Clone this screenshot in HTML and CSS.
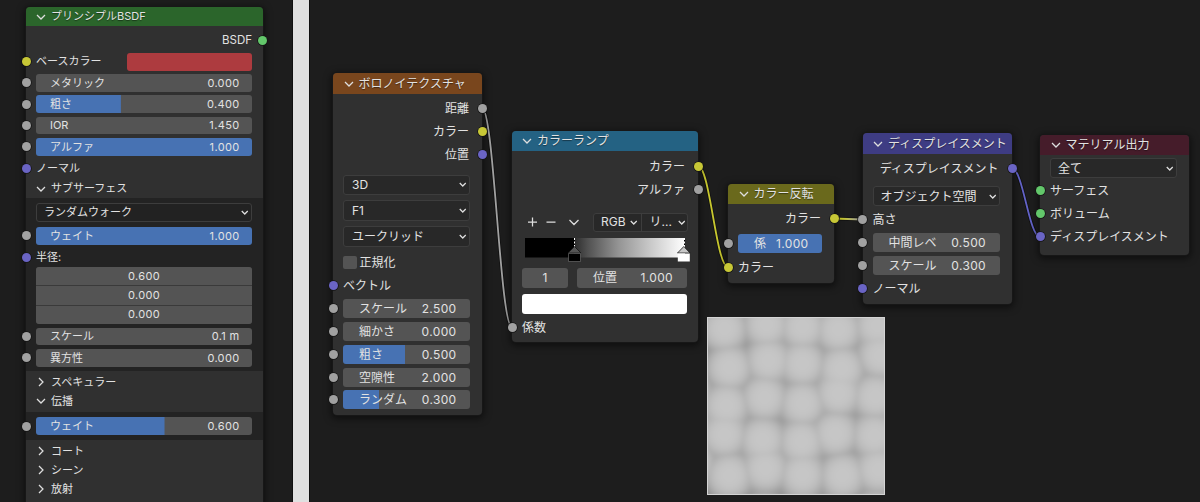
FILE: index.html
```html
<!DOCTYPE html>
<html lang="ja">
<head>
<meta charset="utf-8">
<title>シェーダーノード</title>
<link rel="stylesheet" href="styles.css">
</head>
<body>
<svg class="symbols" width="0" height="0">
  <symbol id="down" viewBox="0 0 10 6"><path d="M1 1l4 4 4-4"/></symbol>
  <symbol id="right" viewBox="0 0 6 10"><path d="M1 1l4 4-4 4"/></symbol>
</svg>
<main class="editor">
  <div class="pane pane-left"></div>
  <div class="divider"></div>
  <div class="pane pane-right"></div>

  <svg class="links" width="1200" height="502" viewBox="0 0 1200 502">
    <defs>
      <linearGradient id="mix" gradientUnits="userSpaceOnUse" x1="838" x2="860" y1="0" y2="0"><stop offset=".2" stop-color="#c7c72f"/><stop offset="1" stop-color="#a1a1a1"/></linearGradient>
    </defs>
    <g class="shade">
      <path d="M482 108C494 108 500 327 512 327"/><path d="M698 166C710 166 716 267 728 267"/><path d="M834 218.500L862 219.500"/><path d="M1012 168.500C1023 168.500 1029 237 1040 237"/>
    </g>
    <path class="gray" d="M482 108C494 108 500 327 512 327"/>
    <path class="yellow" d="M698 166C710 166 716 267 728 267"/>
    <path class="mixed" d="M834 218.500L862 219.500"/>
    <path class="violet" d="M1012 168.500C1023 168.500 1029 237 1040 237"/>
  </svg>

  <section class="node principled">
    <header><svg class="down"><use href="#down"/></svg>プリンシプルBSDF</header>
    <div class="row out"><span>BSDF</span><i class="socket green"></i></div>
    <div class="row"><i class="socket yellow"></i><span>ベースカラー</span><b class="swatch"></b></div>
    <div class="row"><i class="socket"></i><div class="field"><span>メタリック</span><span>0.000</span></div></div>
    <div class="row"><i class="socket"></i><div class="field part" style="--fill:39.3%"><span>粗さ</span><span>0.400</span></div></div>
    <div class="row"><i class="socket"></i><div class="field"><span>IOR</span><span>1.450</span></div></div>
    <div class="row"><i class="socket"></i><div class="field part" style="--fill:100%"><span>アルファ</span><span>1.000</span></div></div>
    <div class="row"><i class="socket violet"></i><span>ノーマル</span></div>
    <div class="panel-title"><svg class="down"><use href="#down"/></svg>サブサーフェス</div>
    <div class="panel subsurface">
      <div class="row"><div class="select"><span>ランダムウォーク</span><svg class="down small"><use href="#down"/></svg></div></div>
      <div class="row weight"><i class="socket"></i><div class="field part" style="--fill:100%"><span>ウェイト</span><span>1.000</span></div></div>
      <div class="row"><i class="socket violet"></i><span>半径:</span></div>
      <div class="vector"><span>0.600</span><span>0.000</span><span>0.000</span></div>
      <div class="row"><i class="socket"></i><div class="field"><span>スケール</span><span>0.1 m</span></div></div>
      <div class="row"><i class="socket"></i><div class="field"><span>異方性</span><span>0.000</span></div></div>
    </div>
    <div class="panel-title first"><svg class="right"><use href="#right"/></svg>スペキュラー</div>
    <div class="panel-title"><svg class="down"><use href="#down"/></svg>伝播</div>
    <div class="panel transmission">
      <div class="row"><i class="socket"></i><div class="field part" style="--fill:59.5%"><span>ウェイト</span><span>0.600</span></div></div>
    </div>
    <div class="panel-title second"><svg class="right"><use href="#right"/></svg>コート</div>
    <div class="panel-title"><svg class="right"><use href="#right"/></svg>シーン</div>
    <div class="panel-title"><svg class="right"><use href="#right"/></svg>放射</div>
  </section>

  <section class="node voronoi">
    <header><svg class="down"><use href="#down"/></svg>ボロノイテクスチャ</header>
    <div class="row out"><span>距離</span><i class="socket"></i></div>
    <div class="row out"><span>カラー</span><i class="socket yellow"></i></div>
    <div class="row out"><span>位置</span><i class="socket violet"></i></div>
    <div class="options">
      <div class="select"><span>3D</span><svg class="down small"><use href="#down"/></svg></div>
      <div class="select"><span>F1</span><svg class="down small"><use href="#down"/></svg></div>
      <div class="select"><span>ユークリッド</span><svg class="down small"><use href="#down"/></svg></div>
    </div>
    <div class="row check"><b class="box"></b><span>正規化</span></div>
    <div class="row"><i class="socket violet"></i><span>ベクトル</span></div>
    <div class="row"><i class="socket"></i><div class="field"><span>スケール</span><span>2.500</span></div></div>
    <div class="row"><i class="socket"></i><div class="field"><span>細かさ</span><span>0.000</span></div></div>
    <div class="row"><i class="socket"></i><div class="field part" style="--fill:49%"><span>粗さ</span><span>0.500</span></div></div>
    <div class="row"><i class="socket"></i><div class="field"><span>空隙性</span><span>2.000</span></div></div>
    <div class="row last"><i class="socket"></i><div class="field part" style="--fill:28.5%"><span>ランダム</span><span>0.300</span></div></div>
  </section>

  <section class="node ramp">
    <header><svg class="down"><use href="#down"/></svg>カラーランプ</header>
    <div class="row out"><span>カラー</span><i class="socket yellow"></i></div>
    <div class="row out"><span>アルファ</span><i class="socket"></i></div>
    <div class="tools">
      <svg class="plusminus" width="50" height="12" viewBox="0 0 50 12"><path d="M1 6h9M5.500 1.500v9M19.500 6h9M42.500 4l4.500 4.500L51.500 4"/></svg>
      <div class="modes">
        <div class="mode"><span>RGB</span><svg class="down small"><use href="#down"/></svg></div>
        <div class="mode"><span>リ...</span><svg class="down small"><use href="#down"/></svg></div>
      </div>
    </div>
    <svg class="gradient" width="170" height="26" viewBox="0 0 170 26">
      <defs><linearGradient id="g"><stop offset="0" stop-color="#2c2c2c"/><stop offset=".12" stop-color="#505050"/><stop offset=".4" stop-color="#949494"/><stop offset=".7" stop-color="#cbcbcb"/><stop offset="1" stop-color="#fff"/></linearGradient></defs>
      <rect x="3" y="1" width="49.500" height="19.500" fill="#000"/>
      <rect x="52" y="1" width="111" height="19.500" fill="url(#g)"/>
      <path d="M52.500 1v9M162.500 1v9" fill="none" stroke="#000" stroke-width="1"/>
      <path d="M52.500 1v9M162.500 1v9" fill="none" stroke="#fff" stroke-width="1" stroke-dasharray="2 1.500"/>
      <path d="M46 16l6.500-6.500 6.500 6.500z" fill="#555" stroke="#161616" stroke-width=".8"/>
      <path d="M46.500 16.500h12v8h-12z" fill="#000" stroke="#777" stroke-width=".6"/>
      <path d="M155.500 16l6.300-6.500 6.300 6.500z" fill="#c8c8c8" stroke="#161616" stroke-width=".8"/>
      <path d="M155.800 16.500h12v8h-12z" fill="#fff"/>
    </svg>
    <div class="stop"><div class="field index">1</div><div class="field pos"><span>位置</span><span>1.000</span></div></div>
    <div class="stop-color"></div>
    <div class="row"><i class="socket"></i><span>係数</span></div>
  </section>

  <section class="node invert">
    <header><svg class="down"><use href="#down"/></svg>カラー反転</header>
    <div class="row out"><span>カラー</span><i class="socket yellow"></i></div>
    <div class="row fac"><i class="socket"></i><div class="field part" style="--fill:100%"><span>係</span><span>1.000</span></div></div>
    <div class="row"><i class="socket yellow"></i><span>カラー</span></div>
  </section>

  <section class="node displace">
    <header><svg class="down"><use href="#down"/></svg>ディスプレイスメント</header>
    <div class="row out"><span>ディスプレイスメント</span><i class="socket violet"></i></div>
    <div class="options"><div class="select"><span>オブジェクト空間</span><svg class="down small"><use href="#down"/></svg></div></div>
    <div class="row"><i class="socket"></i><span>高さ</span></div>
    <div class="row"><i class="socket"></i><div class="field"><span>中間レベ</span><span>0.500</span></div></div>
    <div class="row"><i class="socket"></i><div class="field"><span>スケール</span><span>0.300</span></div></div>
    <div class="row"><i class="socket violet"></i><span>ノーマル</span></div>
  </section>

  <section class="node output">
    <header><svg class="down"><use href="#down"/></svg>マテリアル出力</header>
    <div class="options"><div class="select"><span>全て</span><svg class="down small"><use href="#down"/></svg></div></div>
    <div class="row"><i class="socket green"></i><span>サーフェス</span></div>
    <div class="row"><i class="socket green"></i><span>ボリューム</span></div>
    <div class="row"><i class="socket violet"></i><span>ディスプレイスメント</span></div>
  </section>

  <canvas class="preview" width="178" height="178"></canvas>
</main>
<script src="texture.js"></script>
</body>
</html>
```
FILE: styles.css
```css
* { box-sizing: border-box; }
body { margin: 0; background: #1d1d1d; overflow: hidden; }
.symbols { position: absolute; }
.editor {
  position: relative; display: flex; width: 1200px; height: 502px; overflow: hidden;
  font-family: Inter, "Noto Sans CJK JP", sans-serif; font-size: 12px; color: #e2e2e2;
  line-height: 1; white-space: nowrap;
}
.pane { background: #1d1d1d; }
.pane-left { width: 293px; border-right: 1px solid #111; }
.divider { width: 16px; background: #e0e0e0; }
.pane-right { flex: 1; border-left: 1px solid #101010; }

/* Links between sockets */
.links { position: absolute; left: 0; top: 0; fill: none; stroke-width: 1.8; }
.links .shade { stroke: #111; stroke-width: 3.4; }
.links .gray { stroke: #a1a1a1; }
.links .yellow { stroke: #c7c72f; }
.links .violet { stroke: #6363c7; }
.links .mixed { stroke: url(#mix); }

/* Nodes */
.node {
  --row: 23px;
  position: absolute; background: #303030; border-radius: 4px;
  box-shadow: 0 0 0 1px #171717, 0 2px 7px 2px rgba(0, 0, 0, .5);
}
.node header {
  display: flex; align-items: center; gap: 5px; height: 20.5px; padding: 1px 0 0 10.5px;
  margin-bottom: 3.5px; border-radius: 4px 4px 0 0; text-shadow: 0 1px 1px rgba(0, 0, 0, .45);
}
svg.down { width: 10px; height: 6px; flex: none; }
svg.right { width: 6px; height: 10px; flex: none; margin: 0 2px; }
svg.small { width: 7.5px; height: 5px; stroke-width: 1.7; }
.down, .right { fill: none; stroke: #dedede; stroke-width: 1.25; }
.row { position: relative; display: flex; align-items: center; height: var(--row); padding: 0 12px 0 10px; }
.row > span, .field > span, .select > span { padding-top: 1px; }
.row.out { justify-content: flex-end; padding-right: 13px; }
.socket {
  position: absolute; left: -4.5px; top: calc(50% - 4.5px); width: 9px; height: 9px;
  border-radius: 50%; background: #a1a1a1; box-shadow: 0 0 0 .7px #141414;
}
.out .socket { left: auto; right: -5px; }
.socket.yellow { background: #c7c736; }
.socket.green { background: #63c76b; }
.socket.violet { background: #6a64c4; }
.field {
  display: flex; align-items: center; justify-content: space-between; flex: 1;
  height: 19px; padding: 0 13.5px 0 16px; border-radius: 3px; background: #545454;
}
.field span:last-child, .vector { letter-spacing: .35px; }
.part { background: linear-gradient(#4772b3, #4772b3) 0 0 / var(--fill) 100% no-repeat #545454; }
.options { display: flex; flex-direction: column; padding: 0 12px 0 10px; }
.select {
  display: flex; align-items: center; justify-content: space-between; flex: 1;
  padding: 0 2.5px 0 8px; border: 1px solid #3d3d3d; border-radius: 3px; background: #282828;
}

.principled { --row: 21.35px; left: 26px; top: 7px; width: 236.5px; height: 510px; font-size: 11px; }
.principled header { height: 19px; background: #2b652b; padding: 0 0 0 10px; }
.principled .row { padding: 0 10.5px 0 10px; }
.principled .row > span, .principled .field > span, .principled .select > span { padding-top: .5px; }
.principled .out { font-size: 11.5px; }
.principled .out .socket { right: -4.5px; }
.principled .field { height: 17.5px; padding: 0 12.5px 0 14px; }
.swatch { width: 125.5px; height: 18px; margin-left: auto; border-radius: 3px; background: #ad3b3f; }
.panel-title { display: flex; align-items: center; gap: 5px; height: 19.2px; padding-left: 10px; }
.panel-title.first { margin-top: 2px; }
.panel-title.second { margin-top: 1.5px; }
.panel { background: #232323; }
.subsurface { height: 172.5px; padding-top: 3.5px; }
.subsurface .select { height: 18.5px; padding-left: 7px; background: #222; }
.weight { margin-top: 2.3px; }
.vector {
  display: grid; grid-template-rows: repeat(3, 1fr); gap: 1px; height: 57px; margin: -.8px 10.5px 1.8px 10px;
  overflow: hidden; border-radius: 3px; background: #3a3a3a;
}
.vector span { display: flex; align-items: center; justify-content: center; background: #545454; }
.transmission { height: 28px; margin-top: 1px; padding-top: 3.4px; }

.voronoi { left: 333px; top: 73px; width: 149px; height: 341.5px; }
.voronoi header { background: #79461d; }
.voronoi .options { gap: 5px; margin-top: 8.5px; }
.voronoi .select { flex: none; height: 20.7px; }
.check { gap: 3px; margin-top: 4.4px; }
.voronoi .last { margin-top: -.8px; }
.box { width: 13.5px; height: 13.5px; border-radius: 2px; background: #545454; }

.ramp { left: 512px; top: 130.5px; width: 186px; height: 211.5px; }
.ramp header { background: #246283; padding-left: 10px; }
.tools { display: flex; align-items: center; height: 19px; margin: 12.3px 11px 0 15px; }
.plusminus { overflow: visible; fill: none; stroke: #dedede; stroke-width: 1.25; }
.modes { display: flex; flex: 1; height: 19px; margin-left: 16px; border: 1px solid #3d3d3d; border-radius: 3px; background: #282828; }
.mode { display: flex; align-items: center; justify-content: space-between; width: 46.5px; padding: 0 3px 0 7px; }
.mode + .mode { flex: 1; padding: 0 2px 0 8px; border-left: 1px solid #3d3d3d; }
.gradient { display: block; margin: 5.2px 0 0 10px; }
.stop { display: flex; gap: 9px; height: 20px; margin: 5px 11.5px 0 10px; }
.stop .field { height: 20px; }
.stop .index { flex: none; width: 46px; justify-content: center; padding: 0; }
.stop-color { height: 20px; margin: 6px 11.5px 2px 10px; border-radius: 3px; background: #fff; }

.invert { left: 728px; top: 183.5px; width: 106px; height: 99px; }
.invert header { background: #6a691c; }
.invert .out { margin-top: -.5px; }
.fac { margin: 1.5px 0; }

.displace { left: 862.5px; top: 133px; width: 149px; height: 171px; }
.displace header { background: #3e3c83; }
.displace .options { margin: 6px 0 2px; }
.displace .select, .output .select { flex: none; height: 20px; padding-left: 7px; }

.output { left: 1040px; top: 134.5px; width: 149px; height: 120px; }
.output header { background: #451c2a; }
.output .options { padding-right: 12px; margin: -.5px 0 .8px; }

.preview { position: absolute; left: 707px; top: 317px; width: 178px; height: 178px; }
```
FILE: texture.js
```js
// Smooth Voronoi cells: flat light centres falling off toward the borders.
const canvas = document.querySelector('.preview');
const ctx = canvas.getContext('2d');
const image = ctx.createImageData(178, 178);
const centres = [
  [17, 11], [59, 7], [95, 9], [131, 12], [170, 8],
  [22, 50], [61, 43], [95, 46], [134, 51], [173, 38],
  [19, 88], [57, 80], [95, 86], [131, 76], [168, 79],
  [17, 117], [55, 122], [94, 124], [128, 116], [167, 118],
  [22, 158], [58, 151], [95, 157], [135, 158], [171, 152], [-16, 145],
  [20, 199], [57, 199], [95, 196], [132, 198], [169, 196], [-20, 75], [-20, 115]
];
for (let y = 0; y < 178; y++) {
  for (let x = 0; x < 178; x++) {
    let sum = 0;
    for (const [cx, cy] of centres) {
      sum += Math.exp(-Math.hypot(x - cx, y - cy) * 0.4);
    }
    const d = -Math.log(sum) / 0.4;
    const edge = x === 0 || y === 0 || x === 177 || y === 177;
    const v = edge ? 212 : 198 - 52 * Math.pow(Math.max(0, d) / 27, 3.2);
    const i = (y * 178 + x) * 4;
    image.data[i] = image.data[i + 1] = image.data[i + 2] = v;
    image.data[i + 3] = 255;
  }
}
ctx.putImageData(image, 0, 0);
```
